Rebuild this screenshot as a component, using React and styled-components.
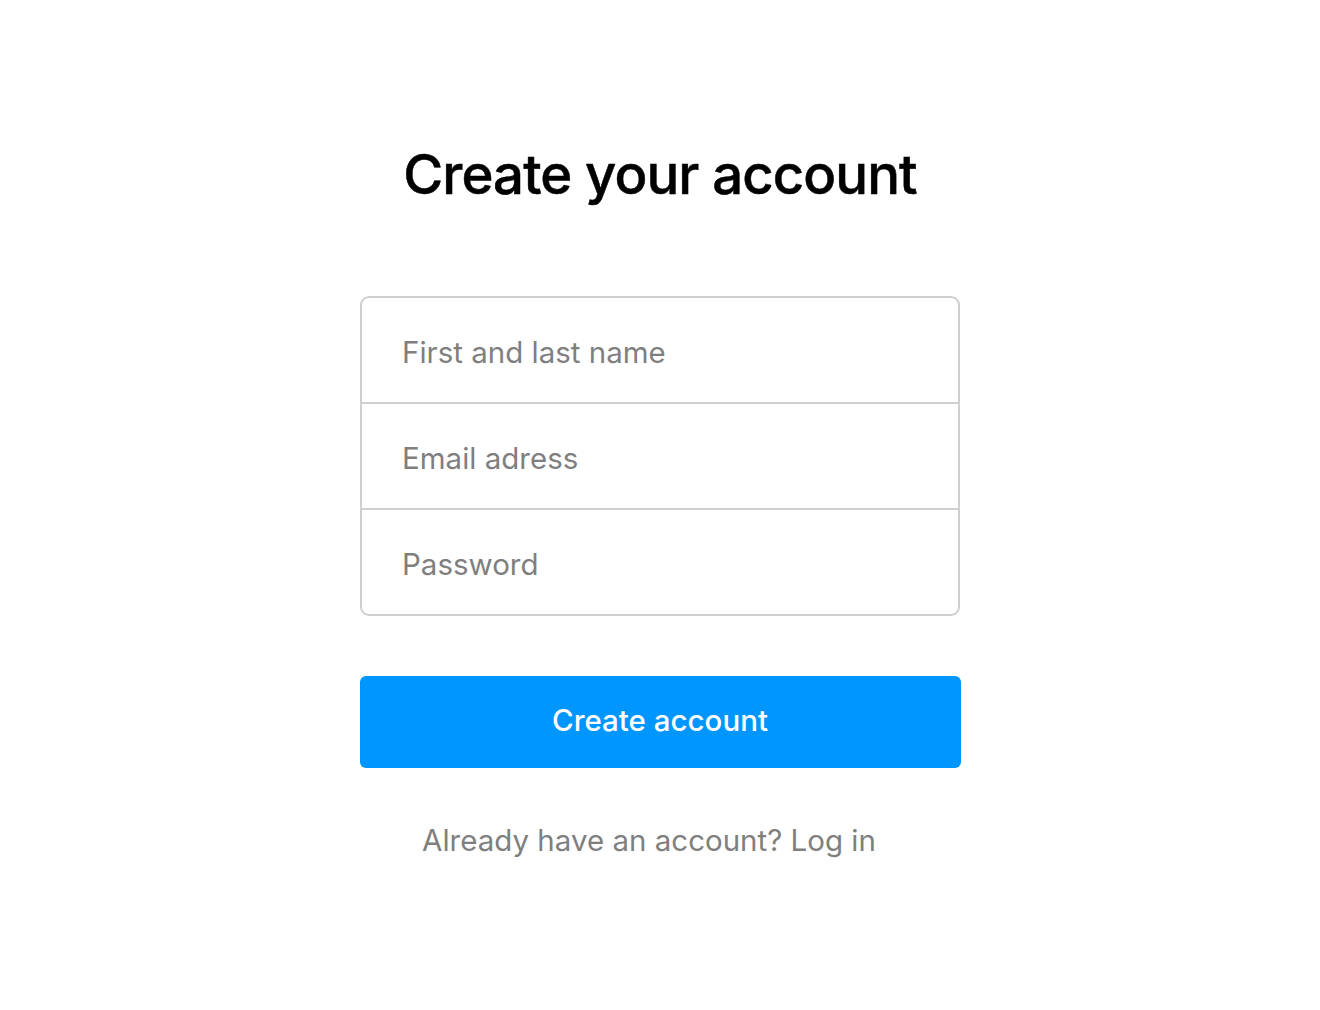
import React from 'react';
import styled, { createGlobalStyle } from 'styled-components';

const GlobalStyle = createGlobalStyle`
  html, body {
    margin: 0;
    padding: 0;
    background: #fff;
  }
  body {
    font-family: 'Inter', 'Noto Sans', sans-serif;
  }
`;

const Page = styled.main`
  display: flex;
  flex-direction: column;
  align-items: center;
  padding-top: 138px;
`;

const Title = styled.h1`
  margin: 0;
  font-size: 54.5px;
  font-weight: 500;
  color: #000;
  line-height: 72px;
  letter-spacing: -0.9px;
  -webkit-text-stroke: 0.5px #000;
`;

const Fields = styled.div`
  margin-top: 86px;
  width: 596px;
  border: 2px solid #cfcfcf;
  border-radius: 9px;
  overflow: hidden;
  display: flex;
  flex-direction: column;
`;

const Field = styled.input`
  border: none;
  border-top: ${(p) => (p.$first ? 'none' : '2px solid #cfcfcf')};
  padding: 4px 0 0 40px;
  box-sizing: border-box;
  height: ${(p) => (p.$first ? '104px' : '106px')};
  font-family: inherit;
  font-size: 29.5px;
  color: #333;
  background: transparent;
  outline: none;

  &::placeholder {
    color: #7f7f7f;
  }
`;

const Button = styled.button`
  margin-top: 60px;
  width: 601px;
  height: 92px;
  border: none;
  border-radius: 6px;
  background: #0096ff;
  color: #fff;
  font-family: inherit;
  font-size: 29.5px;
  font-weight: 500;
  cursor: pointer;
  padding: 0 0 4px;
`;

const Footer = styled.p`
  margin: 52px 22px 0 0;
  font-size: 29.5px;
  color: #7f7f7f;
  line-height: 40px;
`;

export default function App() {
  return (
    <Page>
      <GlobalStyle />
      <Title>Create your account</Title>
      <Fields>
        <Field $first placeholder="First and last name" />
        <Field placeholder="Email adress" />
        <Field type="password" placeholder="Password" />
      </Fields>
      <Button>Create account</Button>
      <Footer>Already have an account? Log in</Footer>
    </Page>
  );
}
